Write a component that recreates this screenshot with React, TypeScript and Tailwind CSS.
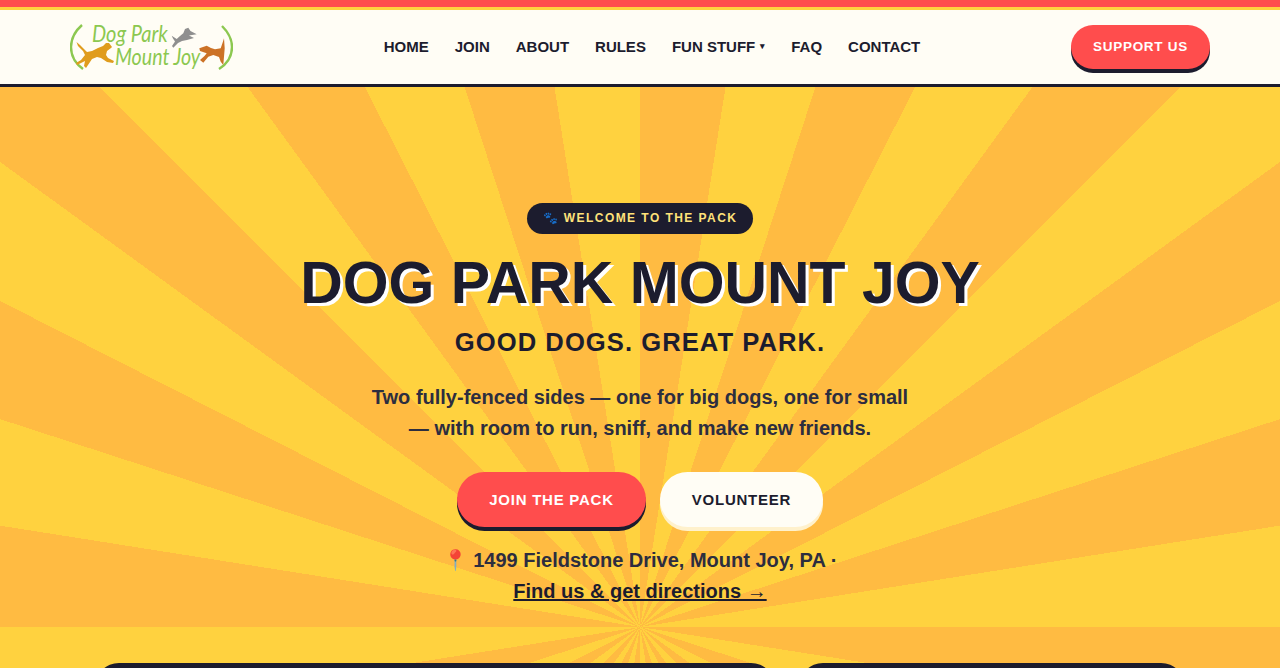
const navLinks = ["HOME", "JOIN", "ABOUT", "RULES", "FUN STUFF", "FAQ", "CONTACT"];

function Logo() {
  return (
    <div className="relative h-[50px] w-[163px] shrink-0 -translate-y-[2px]">
      <span className="absolute left-[22px] top-[0px] origin-top-left scale-y-[1.15] font-['Lato',sans-serif] text-[20px] leading-[23px] italic text-[#8cc850]">
        Dog Park
      </span>
      <span className="absolute left-[45px] top-[23px] origin-top-left scale-y-[1.15] font-['Lato',sans-serif] text-[19.6px] leading-[23px] italic text-[#8cc850]">
        Mount Joy
      </span>
      <svg width="163" height="50" viewBox="0 0 163 50" fill="none" className="absolute left-0 top-0">
        <path d="M12 5C3 13 1 20 1 27C1 36 6 44 13 49" stroke="#8cc850" strokeWidth="2.4" />
        <path d="M152 6C159 13 162 20 162 27C162 36 157 44 149 49" stroke="#8cc850" strokeWidth="2.4" />
        <path
          d="M6.5 22L10 25L17 32L22 31L28 28L33 26L36 23L39 23L42 27L41 28L37 31L36 35L38 38L44 41L43 43L37 42L31 38L27 37L22 39L18 45L16 48L14 46L15 41L11 43L7 45L6 43L11 40L15 35L13 31L8 26Z"
          fill="#e09c1c"
        />
        <path
          d="M101.7 15.7L106.7 19L110 16L113.3 13.3L115 9L118.3 7.7L120.5 11L126.7 14.3L122 15L119 15.5L124 18L117 20L112 21L108 23L103.3 27.7L102 26L105 21.5L103 18.5Z"
          fill="#8f8f8f"
        />
        <path
          d="M129.3 28.3L133 27L136.7 25.7L141 28L145 29.3L150.7 28.3L152.5 23L154 18.3L154.7 28.3L154 36.7L153.3 45L150.7 41.7L149 37L143.3 35L138.3 36.7L133.3 42.7L130 40L134.5 36L136.7 33.3L130 31Z"
          fill="#cc7226"
        />
      </svg>
    </div>
  );
}

function Header() {
  return (
    <header className="border-b-[3px] border-[#1c1c2e] bg-[#fffdf5]">
      <div className="h-[7px] bg-[#ff4d4d]" />
      <div className="h-[3px] bg-[#ffd23f]" />
      <div className="mx-auto flex h-[74px] w-[1140px] items-center justify-between">
        <Logo />
        <nav className="flex items-center gap-[26px] text-[15px] font-bold text-[#1c1c2e]">
          {navLinks.map((link) => (
            <a key={link} href="#" className="flex items-center">
              {link}
              {link === "FUN STUFF" && <span className="ml-[5px] w-[5px] text-[9px]">▾</span>}
            </a>
          ))}
        </nav>
        <a
          href="#"
          className="flex h-[44px] w-[139px] items-center justify-center rounded-full bg-[#ff4d4d] text-[13.5px] font-bold tracking-[0.7px] text-white shadow-[0_4px_0_#1c1c2e]"
        >
          SUPPORT US
        </a>
      </div>
    </header>
  );
}

function Hero() {
  return (
    <section className="h-[581px] bg-[repeating-conic-gradient(from_0deg_at_50%_540px,#ffbb42_0deg_9deg,#ffd23f_9deg_18deg)]">
      <div className="flex flex-col items-center pt-[116px] text-center text-[#1c1c2e]">
        <div className="flex h-[31px] w-[226px] items-center justify-center rounded-full bg-[#1c1c2e] pb-[1px] text-[12px] font-bold tracking-[1.44px] text-[#ffe27a]">
          🐾 WELCOME TO THE PACK
        </div>
        <h1 className="mt-[16px] text-[58.9px] leading-[66px] font-bold [text-shadow:3px_3px_0_#fff]">
          DOG PARK MOUNT JOY
        </h1>
        <p className="mt-[10px] text-[25.6px] leading-[32px] font-bold tracking-[1.04px]">GOOD DOGS. GREAT PARK.</p>
        <p className="mt-[24px] w-[560px] text-[20px] leading-[31px] font-bold text-[#2d2d3f]">
          Two fully-fenced sides — one for big dogs, one for small — with room to run, sniff, and make new friends.
        </p>
        <div className="mt-[28px] flex gap-[14px]">
          <a
            href="#"
            className="flex h-[55px] w-[189px] items-center justify-center rounded-full bg-[#ff4d4d] pt-[1px] text-[15px] font-bold tracking-[0.75px] text-white shadow-[0_4px_0_#1c1c2e]"
          >
            JOIN THE PACK
          </a>
          <a
            href="#"
            className="flex h-[55px] w-[163px] items-center justify-center rounded-full bg-[#fffdf5] pt-[1px] text-[15px] font-bold tracking-[0.75px] text-[#1c1c2e] shadow-[0_4px_0_#fff1cc]"
          >
            VOLUNTEER
          </a>
        </div>
        <p className="mt-[18px] w-[560px] text-[20px] leading-[31px] font-bold text-[#2d2d3f]">
          📍 1499 Fieldstone Drive, Mount Joy, PA ·{" "}
          <a href="#" className="inline-block text-[#1c1c2e] underline">
            Find us &amp; get directions →
          </a>
        </p>
      </div>
      <div className="mt-[56px] flex justify-center gap-[24px]">
        <div className="h-[200px] w-[680px] rounded-[24px] bg-[#1c1c2e]" />
        <div className="h-[200px] w-[386px] rounded-[24px] bg-[#1c1c2e]" />
      </div>
    </section>
  );
}

export default function App() {
  return (
    <div className="h-screen overflow-hidden font-['Liberation_Sans',Arial,sans-serif]">
      <Header />
      <Hero />
    </div>
  );
}
